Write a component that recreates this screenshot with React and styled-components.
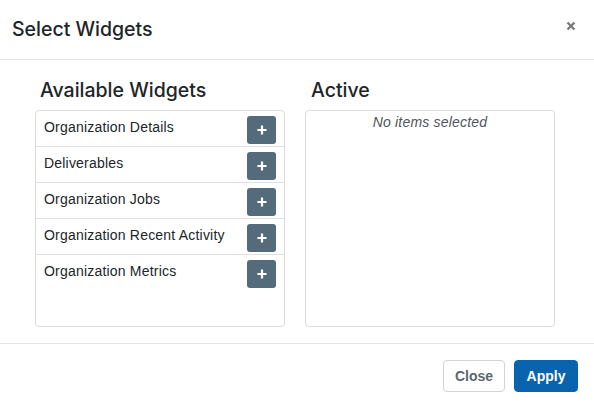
import React from "react";
import styled, { createGlobalStyle } from "styled-components";

const GlobalStyle = createGlobalStyle`
  html, body {
    margin: 0;
    padding: 0;
    background: #fff;
  }
  body {
    font-family: "Liberation Sans", Arial, sans-serif;
    color: #212529;
  }
`;

const Modal = styled.div`
  width: 594px;
  height: 406px;
  display: flex;
  flex-direction: column;
  background: #fff;
`;

const Header = styled.div`
  height: 60px;
  flex: none;
  box-sizing: border-box;
  border-bottom: 1px solid #e3e3e3;
  display: flex;
  align-items: center;
  justify-content: space-between;
  padding: 0 16px 2px 12px;
  h2 {
    margin: 0;
    font-family: Inter, "Liberation Sans", sans-serif;
    font-size: 19.5px;
    font-weight: 500;
    color: #212529;
  }
`;

const CloseX = styled.button`
  border: none;
  background: transparent;
  padding: 0;
  margin-bottom: 5px;
  width: 14px;
  height: 14px;
  display: flex;
  align-items: center;
  justify-content: center;
  cursor: pointer;
`;

const Body = styled.div`
  flex: 1;
  display: grid;
  grid-template-columns: 250px 250px;
  column-gap: 20px;
  align-content: start;
  padding: 18px 39px 0 35px;
  border-bottom: 1px solid #e3e3e3;
`;

const Column = styled.div`
  display: flex;
  flex-direction: column;
`;

const ColumnTitle = styled.h3`
  margin: 0 0 7px ${({ $indent }) => $indent}px;
  font-family: Inter, "Liberation Sans", sans-serif;
  font-size: 19.5px;
  font-weight: 500;
  line-height: 25px;
  color: #212529;
`;

const ListBox = styled.div`
  height: 217px;
  box-sizing: border-box;
  border: 1px solid #dcdcdc;
  border-radius: 4px;
  overflow: hidden;
`;

const Row = styled.div`
  height: 36px;
  box-sizing: border-box;
  display: flex;
  justify-content: space-between;
  align-items: flex-start;
  padding: 5px 8px 0 8px;
  border-bottom: 1px solid #e0e0e0;
  &:last-child {
    border-bottom: none;
  }
  span {
    font-size: 14px;
    letter-spacing: 0.2px;
    color: #212529;
    line-height: 20px;
    padding-top: 1px;
  }
`;

const AddButton = styled.button`
  width: 29px;
  height: 28px;
  border: none;
  border-radius: 3px;
  background: #546b7b;
  padding: 0;
  display: flex;
  align-items: center;
  justify-content: center;
  cursor: pointer;
`;

const Empty = styled.div`
  text-align: center;
  font-style: italic;
  font-size: 14px;
  letter-spacing: 0.2px;
  color: #4f555b;
  padding-top: 3px;
`;

const Footer = styled.div`
  height: 62px;
  flex: none;
  box-sizing: border-box;
  display: flex;
  justify-content: flex-end;
  align-items: flex-start;
  gap: 9px;
  padding: 16px 16px 0 0;
`;

const FooterButton = styled.button`
  height: 32px;
  padding: 0 ${({ $primary }) => ($primary ? 11.5 : 11)}px;
  font-family: "Liberation Sans", Arial, sans-serif;
  font-size: 14px;
  font-weight: 700;
  border-radius: 4px;
  border: 1px solid ${({ $primary }) => ($primary ? "#0a63ad" : "#cfd4d8")};
  background: ${({ $primary }) => ($primary ? "#0a63ad" : "#fff")};
  color: ${({ $primary }) => ($primary ? "#fff" : "#5b6670")};
  cursor: pointer;
`;

const widgets = [
  "Organization Details",
  "Deliverables",
  "Organization Jobs",
  "Organization Recent Activity",
  "Organization Metrics",
];

const Plus = () => (
  <svg width="12" height="12" viewBox="0 0 12 12">
    <path d="M6 1.5v9M1.5 6h9" stroke="#fff" strokeWidth="2.2" />
  </svg>
);

export default function App() {
  return (
    <>
      <GlobalStyle />
      <Modal>
        <Header>
          <h2>Select Widgets</h2>
          <CloseX aria-label="Close">
            <svg width="10" height="10" viewBox="0 0 10 10">
              <path d="M1.5 1.5l7 7M8.5 1.5l-7 7" stroke="#7a7a7a" strokeWidth="2.3" />
            </svg>
          </CloseX>
        </Header>
        <Body>
          <Column>
            <ColumnTitle $indent={5}>Available Widgets</ColumnTitle>
            <ListBox>
              {widgets.map((w) => (
                <Row key={w}>
                  <span>{w}</span>
                  <AddButton aria-label={`Add ${w}`}>
                    <Plus />
                  </AddButton>
                </Row>
              ))}
            </ListBox>
          </Column>
          <Column>
            <ColumnTitle $indent={6}>Active</ColumnTitle>
            <ListBox>
              <Empty>No items selected</Empty>
            </ListBox>
          </Column>
        </Body>
        <Footer>
          <FooterButton>Close</FooterButton>
          <FooterButton $primary>Apply</FooterButton>
        </Footer>
      </Modal>
    </>
  );
}
